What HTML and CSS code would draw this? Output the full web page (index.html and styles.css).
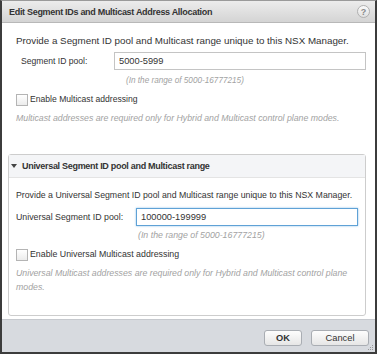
FILE: index.html
```html
<!DOCTYPE html>
<html lang="en">
<head>
    <meta charset="UTF-8">
    <title>Edit Segment IDs</title>
    <link rel="stylesheet" href="styles.css">
</head>
<body>
    <div class="dialog">
        <div class="title-bar">
            <span class="title">Edit Segment IDs and Multicast Address Allocation</span>
            <span class="help">?</span>
        </div>
        <div class="content">
            <div class="main">
                <div class="intro">Provide a Segment ID pool and Multicast range unique to this NSX Manager.</div>
                <div class="field">
                    <label class="field-label">Segment ID pool:</label>
                    <div class="field-input">
                        <input type="text" value="5000-5999">
                        <div class="hint">(In the range of 5000-16777215)</div>
                    </div>
                </div>
                <div class="check-row"><span class="checkbox"></span>Enable Multicast addressing</div>
                <div class="note">Multicast addresses are required only for Hybrid and Multicast control plane modes.</div>
            </div>

            <div class="section">
                <div class="section-header"><span class="caret"></span>Universal Segment ID pool and Multicast range</div>
                <div class="section-body">
                    <div class="intro">Provide a Universal Segment ID pool and Multicast range unique to this NSX Manager.</div>
                    <div class="field">
                        <label class="field-label">Universal Segment ID pool:</label>
                        <div class="field-input">
                            <input type="text" class="focused" value="100000-199999">
                            <div class="hint">(In the range of 5000-16777215)</div>
                        </div>
                    </div>
                    <div class="check-row"><span class="checkbox"></span>Enable Universal Multicast addressing</div>
                    <div class="note">Universal Multicast addresses are required only for Hybrid and Multicast control plane modes.</div>
                </div>
            </div>
        </div>
        <div class="footer">
            <button class="ok">OK</button>
            <button class="cancel">Cancel</button>
            <svg class="grip" width="6" height="6" viewBox="0 0 6 6"><rect x="4" y="0" width="1" height="1" fill="#999"/><rect x="2" y="2" width="1" height="1" fill="#999"/><rect x="4" y="2" width="1" height="1" fill="#999"/><rect x="0" y="4" width="1" height="1" fill="#999"/><rect x="2" y="4" width="1" height="1" fill="#999"/><rect x="4" y="4" width="1" height="1" fill="#999"/></svg>
        </div>
    </div>
</body>
</html>
```

FILE: styles.css
```css
body { margin: 0; font-family: "Liberation Sans", Arial, sans-serif; font-size: 8.8px; color: #333; background: #fff; }
.dialog { width: 377px; height: 354px; box-sizing: border-box; border: 2px solid #3c3c3c; border-top: 1px solid #9a9a9a; display: flex; flex-direction: column; background: #fff; overflow: hidden; }
.title-bar { height: 22px; flex: none; box-sizing: border-box; display: flex; align-items: center; justify-content: space-between; padding: 0 5px 0 7px; background: linear-gradient(#ececec, #d4d4d4); border-bottom: 1px solid #b8b8b8; }
.title { font-weight: bold; font-size: 9px; letter-spacing: -0.3px; color: #333; }
.help { width: 11px; height: 11px; border-radius: 50%; border: 1px solid #b0b0b0; background: linear-gradient(#fafafa, #e0e0e0); color: #888; font-size: 9px; font-weight: bold; display: flex; align-items: center; justify-content: center; }
.content { flex: 1; min-height: 0; display: flex; flex-direction: column; padding: 11px 9px 3px 6px; }
.main { padding-left: 8px; }
.intro { line-height: 13px; }
.main .intro { font-size: 9.8px; }
.field { display: flex; }
.field-label { line-height: 18px; }
.main .field { margin-top: 5px; }
.main .field-label { width: 93px; padding-left: 5px; font-size: 8.6px; }
.field-input { flex: 1; }
.field input { display: block; width: 100%; height: 18px; box-sizing: border-box; border: 1px solid #c4c4c4; padding: 0 4px; font-family: inherit; font-size: 9.3px; color: #333; outline: none; }
.field input.focused { border: 1px solid #5fa2d6; box-shadow: 0 0 2px #8fc2ea; }
.hint { font-style: italic; color: #a2a2a2; line-height: 13px; }
.main .hint { margin-top: 4px; padding-left: 12px; font-size: 8.2px; }
.check-row { display: flex; align-items: center; line-height: 13px; margin-top: 6px; }
.main .check-row { font-size: 8.6px; }
.checkbox { width: 10px; height: 10px; border: 1px solid #b4b4b4; background: linear-gradient(#fff, #ececec); margin-right: 2px; }
.note { font-style: italic; color: #a2a2a2; line-height: 14px; margin-top: 5px; font-size: 8.75px; }
.section { flex: 1; margin-top: 29px; border: 1px solid #cdcdcd; border-radius: 3px; }
.section-header { height: 22px; display: flex; align-items: center; padding-left: 2px; background: #f4f5f7; border-bottom: 1px solid #e4e4e4; font-weight: bold; font-size: 9px; letter-spacing: -0.3px; }
.caret { width: 0; height: 0; border-left: 3px solid transparent; border-right: 3px solid transparent; border-top: 4px solid #444; margin-right: 5px; }
.section-body { padding: 11px 7px 0 7px; }
.section-body .intro { font-size: 8.75px; }
.section-body .field { margin-top: 6px; }
.section-body .field-label { width: 120px; }
.section-body .hint { margin-top: 3px; padding-left: 2px; }
.footer { height: 33px; flex: none; box-sizing: border-box; display: flex; align-items: flex-start; justify-content: flex-end; padding: 10px 6px 0 0; background: #d7dadf; border-top: 1px solid #c6c9ce; position: relative; }
.footer button { height: 16px; margin-left: 9px; border: 1px solid #a9adb3; border-radius: 3px; background: linear-gradient(#fdfdfd, #e6e6e6); font-family: inherit; font-size: 9.3px; color: #333; padding: 0; }
.footer button.ok { font-weight: bold; width: 38px; }
.footer button.cancel { width: 58px; }
.grip { position: absolute; right: 1px; bottom: 1px; }
```
